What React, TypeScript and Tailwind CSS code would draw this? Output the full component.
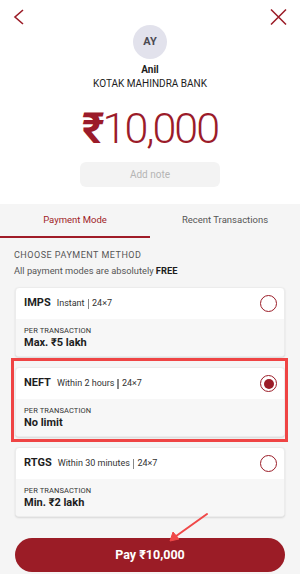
import React from "react";

const RED = "#9b1c27";

type Mode = { code: string; eta: string; limit: string; selected?: boolean };

const MODES: Mode[] = [
  { code: "IMPS", eta: "Instant", limit: "Max. ₹5 lakh" },
  { code: "NEFT", eta: "Within 2 hours", limit: "No limit", selected: true },
  { code: "RTGS", eta: "Within 30 minutes", limit: "Min. ₹2 lakh" },
];

function Radio({ on }: { on?: boolean }) {
  return (
    <div className="w-[17px] h-[17px] rounded-full border-[1.5px] border-[#9b1c27] flex items-center justify-center">
      {on && <div className="w-[10px] h-[10px] rounded-full bg-[#9b1c27]" />}
    </div>
  );
}

function ModeCard({ m }: { m: Mode }) {
  return (
    <div className="relative">
      <div className="rounded-[4px] overflow-hidden bg-white shadow-[0_1px_2px_rgba(0,0,0,0.12)] border border-[#ececec]">
        <div className="h-[31px] flex items-center justify-between pl-[8px] pr-[7px]">
          <div className="flex items-center">
            <span className="text-[11px] font-bold text-[#1d1d1d]">{m.code}</span>
            <span className="ml-[6px] text-[9px] text-[#333]">{m.eta}</span>
            <span className="mx-[3px] w-[1.5px] h-[10px] bg-[#888]" />
            <span className="text-[9px] text-[#333]">24×7</span>
          </div>
          <Radio on={m.selected} />
        </div>
        <div className="h-[37px] bg-[#f7f7f7] pl-[8px] pt-[7px]">
          <div className="text-[7.5px] leading-[10px] text-[#333] tracking-[0.1px]">PER TRANSACTION</div>
          <div className="text-[11px] leading-[14px] font-bold text-[#1d1d1d]">{m.limit}</div>
        </div>
      </div>
      {m.selected && (
        <div className="absolute -top-[9px] -left-[4px] -right-[3px] -bottom-[5px] border-[3px] border-[#ef4444] pointer-events-none" />
      )}
    </div>
  );
}

export default function App() {
  return (
    <div
      className="relative w-[300px] h-[574px] overflow-hidden bg-[#f5f5f5]"
      style={{ fontFamily: "Roboto, 'Noto Sans', sans-serif" }}
    >
      {/* top */}
      <div className="bg-white pb-[17px]">
        <div className="flex justify-between px-[13px] pt-[9px] h-[25px]">
          <svg width="12" height="16" viewBox="0 0 12 16" fill="none">
            <path d="M10 1 L2 8 L10 15" stroke={RED} strokeWidth="1.6" />
          </svg>
          <svg width="17" height="16" viewBox="0 0 17 16" fill="none">
            <path d="M1 0.5 L16 15.5 M16 0.5 L1 15.5" stroke={RED} strokeWidth="1.5" />
          </svg>
        </div>
        <div className="mx-auto w-[34px] h-[34px] rounded-full bg-[#e2e2ec] flex items-center justify-center text-[11px] font-bold text-[#4a4a52]">
          AY
        </div>
        <div className="mt-[4px] text-center text-[10px] leading-[14px] font-bold text-[#1d1d1d]">Anil</div>
        <div className="text-center text-[10px] leading-[14px] text-[#1d1d1d]">KOTAK MAHINDRA BANK</div>
        <div className="mt-[15px] text-center text-[43px] leading-[45px] font-light text-[#9b1b2a] tracking-[-2px]">
          <span className="font-bold">₹</span>10,000
        </div>
        <div className="mx-auto mt-[11px] w-[140px] h-[25px] rounded-[6px] bg-[#f3f3f3] flex items-center justify-center text-[10px] text-[#b5b5b5]">
          Add note
        </div>
      </div>

      {/* tabs */}
      <div className="flex h-[34px]">
        <div className="w-1/2 flex items-center justify-center text-[9.5px] text-[#a01c28] border-b-2 border-[#a01c28]">
          Payment Mode
        </div>
        <div className="w-1/2 flex items-center justify-center text-[9.5px] text-[#555] border-b-2 border-transparent">
          Recent Transactions
        </div>
      </div>

      {/* modes */}
      <div className="px-[15px] pt-[10px]">
        <div className="-ml-[1px] text-[9px] leading-[14px] tracking-[0.5px] text-[#555]">CHOOSE PAYMENT METHOD</div>
        <div className="-ml-[1px] mt-[2px] text-[9.3px] leading-[14px] text-[#555]">
          All payment modes are absolutely <span className="font-bold text-[#1d1d1d]">FREE</span>
        </div>
        <div className="mt-[9px] flex flex-col gap-[10px]">
          {MODES.map(m => (
            <ModeCard key={m.code} m={m} />
          ))}
        </div>
        <button className="mt-[21px] w-full h-[34px] rounded-full bg-[#9b1c26] text-white text-[12.5px] font-bold">
          Pay ₹10,000
        </button>
      </div>

      {/* annotation arrow */}
      <svg className="absolute left-[160px] top-[507px]" width="56" height="40" viewBox="0 0 56 40" fill="none">
        <path d="M47 7 L12 32" stroke="#f04848" strokeWidth="2" strokeLinecap="round" />
        <path d="M10 34 L13 25 L19 32 Z" fill="#f04848" stroke="#f04848" strokeWidth="1" strokeLinejoin="round" />
      </svg>
    </div>
  );
}
